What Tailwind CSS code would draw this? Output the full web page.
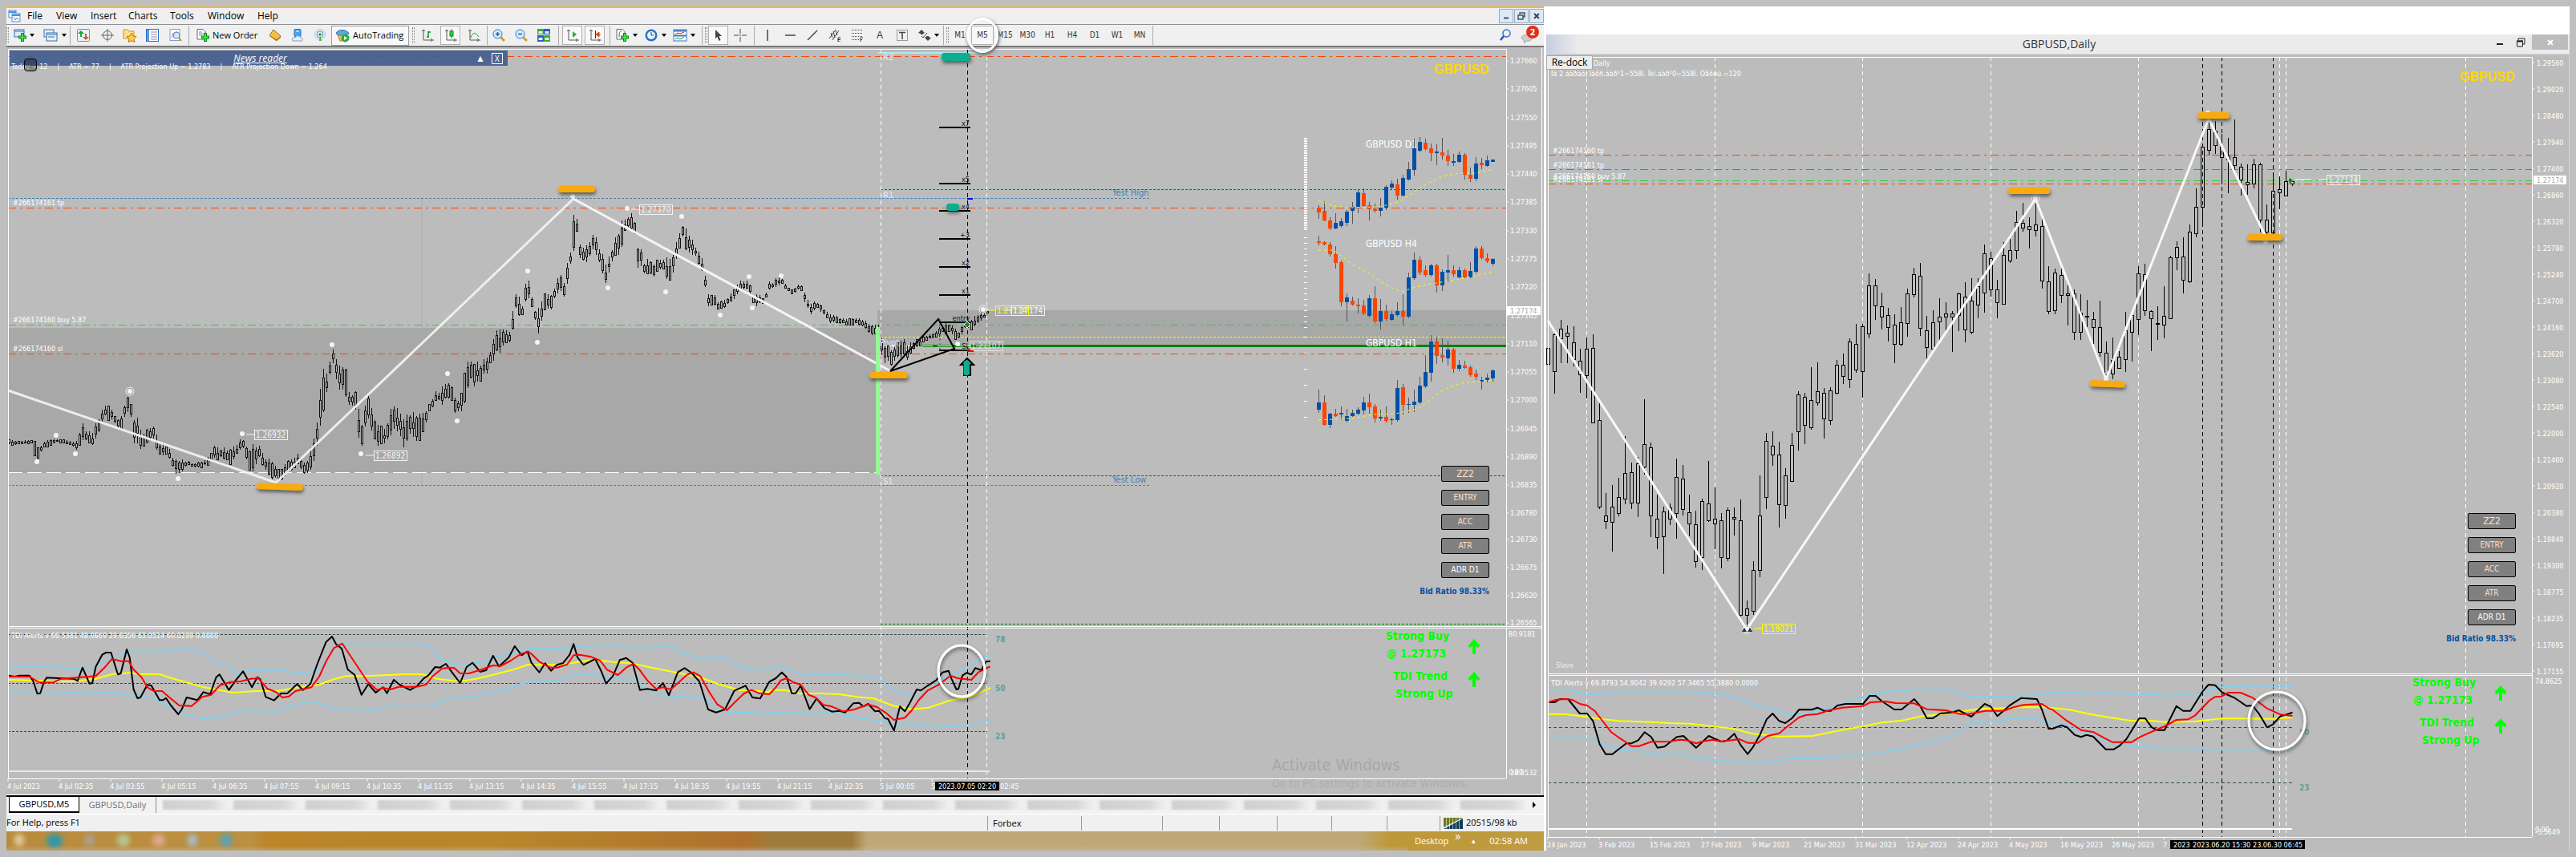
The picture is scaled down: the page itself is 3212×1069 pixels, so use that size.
<!DOCTYPE html>
<html lang="en">
<head>
  <meta charset="UTF-8"/>
  <meta name="viewport" content="width=device-width, initial-scale=1.0"/>
  <title>GBPUSD,M5</title>
  <script src="https://cdn.jsdelivr.net/npm/@tailwindcss/browser@4"></script>
</head>
<body class="bg-[#bfbfbf] p-2 font-['Open_Sans','Liberation_Sans',sans-serif] text-xs text-black">

<main class="flex gap-[3px] bg-white">

  <!-- Terminal window -->
  <section class="relative flex min-w-0 flex-[1917] flex-col border-t-2 border-[#f0b848] bg-[#f0f0f0]">

    <!-- Menu -->
    <nav class="flex h-[21px] items-center border-b border-[#8e8e96] pl-0.5 leading-5">
      <svg class="mr-2 h-4 w-4" viewBox="0 0 16 16" fill="#fff" stroke="#4a8fd8"><rect x="1" y="1" width="9" height="9"/><path d="M1 3h9" stroke-width="2"/><rect x="5" y="5" width="10" height="10"/><path d="M5 7h10" stroke-width="2"/><path d="M7 9l2 4 2-3 2 3" fill="none"/></svg>
      <a href="#" class="w-9 pl-0">File</a>
      <a href="#" class="w-[43px]">View</a>
      <a href="#" class="w-[47px]">Insert</a>
      <a href="#" class="w-[52px]">Charts</a>
      <a href="#" class="w-[47px]">Tools</a>
      <a href="#" class="w-[62px]">Window</a>
      <a href="#">Help</a>
      <div class="ml-auto flex gap-px">
        <button aria-label="Minimize" class="grid h-[18px] w-[18px] place-items-center border border-[#9ab] bg-[#dceaf8]"><svg class="h-3 w-3" viewBox="0 0 12 12"><path d="M3 8.500h6" stroke="#456" stroke-width="2"/></svg></button>
        <button aria-label="Restore" class="grid h-[18px] w-[18px] place-items-center border border-[#9ab] bg-[#dceaf8]"><svg class="h-3 w-3" viewBox="0 0 12 12" fill="none" stroke="#456"><path d="M4 4V2h6v5H8M2 5h6v5H2z" stroke-width="1.500"/></svg></button>
        <button aria-label="Close" class="grid h-[18px] w-[18px] place-items-center border border-[#9ab] bg-[#dceaf8]"><svg class="h-3 w-3" viewBox="0 0 12 12"><path d="M3 3l6 6M9 3l-6 6" stroke="#345" stroke-width="2"/></svg></button>
      </div>
    </nav>

    <!-- Toolbar -->
    <div class="flex h-7 items-center border-b-2 border-[#777] text-[11px]">
      <span class="h-5 w-[3px] border-x border-dotted border-[#888]"></span>
      <button aria-label="New chart" class="flex w-[38px] items-center gap-1 pl-1.5"><svg class="h-4 w-4" viewBox="0 0 16 16"><rect x="1" y="1" width="12" height="9" fill="#dcebfa" stroke="#3a6ea8"/><path d="M1 3h12" stroke="#3a6ea8"/><path d="M11 5v11M6 10.500h10" stroke="#0a8a1a" stroke-width="4"/><path d="M11 6v9M7 10.500h8" stroke="#3ce04a" stroke-width="2"/></svg><svg class="h-1 w-1.5" viewBox="0 0 6 4"><path d="M0 0h6L3 4z"/></svg></button>
      <button aria-label="Profiles" class="flex w-[38px] items-center gap-1 pl-1"><svg class="h-4 w-5" viewBox="0 0 20 16" fill="#e4effa" stroke="#3a6ea8"><rect x="2" y="1" width="12" height="9"/><rect x="5" y="5" width="13" height="10"/><path d="M5 7h13M7 10h8"/></svg><svg class="h-1 w-1.5" viewBox="0 0 6 4"><path d="M0 0h6L3 4z"/></svg></button>
      <span class="h-6 w-px bg-[#aaa]"></span>
      <button aria-label="Market watch" class="grid h-6 w-8 place-items-center"><svg class="h-4 w-4" viewBox="0 0 16 16"><rect x=".5" y=".5" width="15" height="15" rx="1" fill="#e4f0fc" stroke="#5b94cf"/><path d="M5 2l4 4H6v4H4V6H1z" fill="#18a830"/><path d="M11 14l4-4h-3V6h-2v4H7z" fill="#e0541c"/></svg></button>
      <button aria-label="Data window" class="grid h-6 w-7 place-items-center"><svg class="h-4 w-4" viewBox="0 0 16 16" fill="none" stroke="#666"><circle cx="8" cy="8" r="5.500"/><path d="M8 0v16M0 8h16"/></svg></button>
      <button aria-label="Navigator" class="grid h-6 w-7 place-items-center"><svg class="h-[18px] w-[18px]" viewBox="0 0 18 18"><path d="M1 2h5l2 2h6v9H1z" fill="#ffe08a" stroke="#c8962c"/><path d="M11 6l2 4 4 .5-3 3 .8 4.200-3.800-2-3.700 2 .7-4.200-3-3 4-.5z" fill="#ffcf3a" stroke="#b5761a"/></svg></button>
      <button aria-label="Terminal" class="grid h-6 w-7 place-items-center"><svg class="h-4 w-4" viewBox="0 0 16 16"><rect x=".5" y=".5" width="15" height="15" fill="#fff" stroke="#2d6fc0"/><path d="M1 1h3v14H1z" fill="#5b9be0"/><path d="M6 4h8M6 7h8M6 10h8M6 13h8" stroke="#88a"/></svg></button>
      <button aria-label="Strategy tester" class="grid h-6 w-[30px] place-items-center"><svg class="h-4 w-4" viewBox="0 0 16 16"><rect x="1" y=".5" width="12" height="14" fill="#fff" stroke="#7ba4cf"/><path d="M3 11l2-6 2 4 2-6" fill="none" stroke="#a86"/><circle cx="9" cy="8" r="4" fill="#cfe6fa" fill-opacity=".8" stroke="#4b87c4"/><path d="M12 11l3 4" stroke="#c90" stroke-width="2"/></svg></button>
      <span class="mx-px h-6 w-px bg-[#aaa]"></span>
      <button class="flex w-[92px] items-center gap-1 pl-2 whitespace-nowrap"><svg class="h-4 w-4 shrink-0" viewBox="0 0 16 16"><path d="M1 .5h7l3 3V13H1z" fill="#fff" stroke="#667"/><path d="M3 4h4M3 6h6M3 8h4" stroke="#888"/><path d="M11 5v11M6 10.500h10" stroke="#0a8a1a" stroke-width="4"/><path d="M11 6v9M7 10.500h8" stroke="#3ce04a" stroke-width="2"/></svg>New Order</button>
      <button aria-label="MetaEditor" class="grid h-6 w-7 place-items-center"><svg class="h-4 w-4" viewBox="0 0 16 16"><path d="M6 1l9 8-5 6-9-7z" fill="#f3c14a" stroke="#a86c12"/><path d="M1 8l9 5 5-4v2l-5 4-9-6z" fill="#b07818"/></svg></button>
      <button aria-label="VPS" class="grid h-6 w-7 place-items-center"><svg class="h-4 w-4" viewBox="0 0 16 16"><rect x="4" y=".5" width="8" height="9" rx="1" fill="#4ba3ee" stroke="#1d6fc4"/><path d="M6 3h4" stroke="#fff"/><path d="M2 15c-2-3 1-5 3-4 1-3 6-3 7 0 3 0 3 4 1 4z" fill="#e4eefa" stroke="#7d9cc4"/></svg></button>
      <button aria-label="Signals" class="grid h-6 w-7 place-items-center"><svg class="h-4 w-4" viewBox="0 0 16 16" fill="none"><circle cx="8" cy="7" r="6.500" stroke="#9cc4e0"/><circle cx="8" cy="7" r="4" stroke="#4a94d0"/><circle cx="8" cy="7" r="1.800" fill="#2a9a3a"/><path d="M8 8l2 7H7z" fill="#48b050"/></svg></button>
      <button class="flex h-[25px] w-[97px] items-center gap-1 border border-[#a0a0a0] bg-[#f8f8f8] pl-1 whitespace-nowrap"><svg class="h-[18px] w-[18px] shrink-0" viewBox="0 0 18 18"><path d="M1 7c1-6 14-6 16 0-4 3-12 3-16 0z" fill="#5aa7e4" stroke="#2d74b4"/><path d="M3 9h11l-3 7H6z" fill="#f0c050" stroke="#b08020"/><circle cx="12.500" cy="12.500" r="5" fill="#28b03c"/><path d="M11 10v5l4-2.500z" fill="#fff"/></svg>AutoTrading</button>
      <span class="mx-1 h-5 w-[3px] border-x border-dotted border-[#888]"></span>
      <button aria-label="Bar chart" class="grid h-6 w-6 place-items-center"><svg class="h-4 w-4" viewBox="0 0 16 16" fill="none" stroke="#555"><path d="M3 1v13h13M1 3l2-2 2 2M12 12l2 2-2 2"/><path d="M9 3v8M9 4h3M7 10h2" stroke="#0a8a1a" stroke-width="1.500"/></svg></button>
      <button aria-label="Candlesticks" class="ml-1 grid h-6 w-[25px] place-items-center border border-[#b0b0b0] bg-[#f8f8f8]"><svg class="h-4 w-4" viewBox="0 0 16 16" fill="none" stroke="#555"><path d="M3 1v13h13M1 3l2-2 2 2M12 12l2 2-2 2"/><path d="M9 0v12" stroke="#0a8a1a"/><rect x="7" y="3" width="4" height="6" fill="#2cd040" stroke="#0a8a1a"/></svg></button>
      <button aria-label="Line chart" class="grid h-6 w-[33px] place-items-center"><svg class="h-4 w-4" viewBox="0 0 16 16" fill="none" stroke="#555"><path d="M3 1v13h13M1 3l2-2 2 2M12 12l2 2-2 2"/><path d="M4 11c2-6 5-8 10-1" stroke="#2a9a3a"/></svg></button>
      <span class="h-6 w-px bg-[#aaa]"></span>
      <button aria-label="Zoom in" class="grid h-6 w-7 place-items-center"><svg class="h-4 w-4" viewBox="0 0 16 16"><path d="M10 10l5 5" stroke="#d8a020" stroke-width="3"/><circle cx="6.500" cy="6.500" r="5.500" fill="#d4eafc" stroke="#2d74c0"/><path d="M6.500 4v5M4 6.500h5" stroke="#1d5fb0" stroke-width="1.500"/></svg></button>
      <button aria-label="Zoom out" class="grid h-6 w-7 place-items-center"><svg class="h-4 w-4" viewBox="0 0 16 16"><path d="M10 10l5 5" stroke="#d8a020" stroke-width="3"/><circle cx="6.500" cy="6.500" r="5.500" fill="#d4eafc" stroke="#2d74c0"/><path d="M4 6.500h5" stroke="#1d5fb0" stroke-width="1.500"/></svg></button>
      <button aria-label="Tile windows" class="grid h-6 w-7 place-items-center"><svg class="h-4 w-4" viewBox="0 0 16 16"><path d="M0 0h8v7H0zM8 8h8v8H8z" fill="#3fa83c"/><path d="M8 0h8v7H8zM0 8h8v8H0z" fill="#2c5fc4"/><path d="M1.500 3h5v3h-5zM9.500 3h5v3h-5zM1.500 11h5v3h-5zM9.500 11h5v3h-5z" fill="#dcecff"/></svg></button>
      <span class="mx-1 h-6 w-px bg-[#aaa]"></span>
      <button aria-label="Auto scroll" class="grid h-6 w-[25px] place-items-center border border-[#b0b0b0] bg-[#f8f8f8]"><svg class="h-4 w-4" viewBox="0 0 16 16" fill="none" stroke="#555"><path d="M3 1v13h13M1 3l2-2 2 2M12 12l2 2-2 2"/><path d="M8 3l5 4-5 4z" fill="#22b038" stroke="none"/></svg></button>
      <button aria-label="Chart shift" class="ml-[3px] grid h-6 w-[25px] place-items-center border border-[#b0b0b0] bg-[#f8f8f8]"><svg class="h-4 w-4" viewBox="0 0 16 16" fill="none" stroke="#555"><path d="M3 1v13h13M1 3l2-2 2 2M12 12l2 2-2 2"/><path d="M8.500 2v10" stroke="#333"/><path d="M15 7h-4M13 4l-4 3 4 3z" fill="#d84818" stroke="#d84818"/></svg></button>
      <span class="mx-1.5 h-6 w-px bg-[#aaa]"></span>
      <button aria-label="Indicators" class="flex w-9 items-center gap-1"><svg class="h-4 w-[18px]" viewBox="0 0 18 16"><path d="M2 .5h7l3 3V13H2z" fill="#fff" stroke="#667"/><path d="M5 10c0-6 1-7 3-7" fill="none" stroke="#555"/><path d="M12 5v11M7 10.500h10" stroke="#0a8a1a" stroke-width="4"/><path d="M12 6v9M8 10.500h8" stroke="#3ce04a" stroke-width="2"/></svg><svg class="h-1 w-1.5" viewBox="0 0 6 4"><path d="M0 0h6L3 4z"/></svg></button>
      <button aria-label="Periods" class="flex w-9 items-center gap-1"><svg class="h-4 w-[18px]" viewBox="0 0 18 16"><circle cx="9" cy="8" r="7.500" fill="#2870c8"/><circle cx="9" cy="8" r="5" fill="#eaf4ff"/><path d="M9 4v4h3" fill="none" stroke="#245"/></svg><svg class="h-1 w-1.5" viewBox="0 0 6 4"><path d="M0 0h6L3 4z"/></svg></button>
      <button aria-label="Templates" class="flex w-9 items-center gap-1"><svg class="h-4 w-[18px]" viewBox="0 0 18 16"><rect x="1" y="1" width="16" height="14" fill="#fff" stroke="#3a7ac0"/><path d="M1 2.500h16M1 8.500h16" stroke="#3a7ac0" stroke-width="2"/><path d="M3 7l3-2 3 1 5-2" fill="none" stroke="#c02810"/><path d="M3 13l3-2 3 2 5-3" fill="none" stroke="#189030"/></svg><svg class="h-1 w-1.5" viewBox="0 0 6 4"><path d="M0 0h6L3 4z"/></svg></button>
      <span class="mr-[3px] h-6 w-px bg-[#aaa]"></span>
      <span class="mr-px h-5 w-[3px] border-x border-dotted border-[#888]"></span>
      <button aria-label="Cursor" class="grid h-6 w-[25px] place-items-center border border-[#b0b0b0] bg-[#f8f8f8]"><svg class="h-4 w-4" viewBox="0 0 16 16"><path d="M4 1l8 8H8.500l2 5-2 1-2-5L4 12z" fill="#444"/></svg></button>
      <button aria-label="Crosshair" class="grid h-6 w-[30px] place-items-center"><svg class="h-4 w-4" viewBox="0 0 16 16"><path d="M8 0v6M8 10v6M0 8h6M10 8h6M7 8h2" stroke="#444"/></svg></button>
      <span class="mx-0.5 h-6 w-px bg-[#aaa]"></span>
      <button aria-label="Vertical line" class="grid h-6 w-7 place-items-center"><svg class="h-4 w-4" viewBox="0 0 16 16"><path d="M8 1v14" stroke="#444" stroke-width="1.500"/></svg></button>
      <button aria-label="Horizontal line" class="grid h-6 w-7 place-items-center"><svg class="h-4 w-4" viewBox="0 0 16 16"><path d="M2 8h13" stroke="#444" stroke-width="1.500"/></svg></button>
      <button aria-label="Trendline" class="grid h-6 w-7 place-items-center"><svg class="h-4 w-4" viewBox="0 0 16 16"><path d="M2 14L14 2" stroke="#444" stroke-width="1.500"/></svg></button>
      <button aria-label="Channel" class="grid h-6 w-7 place-items-center"><svg class="h-4 w-4" viewBox="0 0 16 16"><path d="M1 12L9 1M5 14l8-12M3 5l2 6M6 3l2 8M9 2l2 6" stroke="#444" fill="none"/><path d="M15 11h-3v5h3M12 13.500h3" stroke="#222" fill="none"/></svg></button>
      <button aria-label="Fibonacci" class="grid h-6 w-7 place-items-center"><svg class="h-4 w-4" viewBox="0 0 16 16" stroke="#444" fill="none"><path d="M1 1.500h13M1 5.500h13M1 9.500h13M1 13.500h9" stroke-dasharray="1 1"/><path d="M12 16v-5h3M12 13.500h2"/></svg></button>
      <button class="grid h-6 w-7 place-items-center font-['Liberation_Sans'] text-xs text-[#333]">A</button>
      <button aria-label="Text label" class="grid h-6 w-7 place-items-center"><svg class="h-4 w-4" viewBox="0 0 16 16" fill="none" stroke="#444"><rect x="1.500" y="1.500" width="13" height="13" stroke-dasharray="1 1"/><path d="M4 4.500h8M8 4v9" stroke-width="1.500"/></svg></button>
      <button aria-label="Arrows" class="flex w-[34px] items-center gap-1 pl-1.5"><svg class="h-4 w-4" viewBox="0 0 16 16" fill="#444"><path d="M4 1l4 4-2 1v1H3V6L0 5zM12 15l-4-4 2-1V9h3v1l3 1z"/><path d="M4 9l2 2 5-6" stroke="#444" fill="none"/></svg><svg class="h-1 w-1.5" viewBox="0 0 6 4"><path d="M0 0h6L3 4z"/></svg></button>
      <span class="mx-[3px] h-6 w-px bg-[#aaa]"></span>
      <span class="h-5 w-[3px] border-x border-dotted border-[#888]"></span>
      <div class="flex font-['DejaVu_Sans_Condensed','Liberation_Sans',sans-serif] text-[10px] text-[#333]">
        <button class="h-6 w-7">M1</button>
        <button class="relative h-6 w-7 border border-[#b0b0b0] bg-[#f8f8f8]">M5<span class="absolute -top-[11px] -left-[7px] z-10 h-[44px] w-10 rounded-[50%] border-[3px] border-white shadow-[1px_2px_4px_#555]"></span></button>
        <button class="h-6 w-7">M15</button>
        <button class="h-6 w-7">M30</button>
        <button class="h-6 w-7">H1</button>
        <button class="h-6 w-7">H4</button>
        <button class="h-6 w-7">D1</button>
        <button class="h-6 w-7">W1</button>
        <button class="h-6 w-7">MN</button>
      </div>
      <span class="ml-0.5 h-6 w-px bg-[#aaa]"></span>
      <button aria-label="Search" class="ml-auto"><svg class="h-4 w-4" viewBox="0 0 16 16" fill="none"><circle cx="9.500" cy="5.500" r="4.500" stroke="#3a6fd8" stroke-width="1.500"/><path d="M6 9l-4 5" stroke="#2850b8" stroke-width="2.500"/></svg></button>
      <button class="relative mr-1.5 ml-2.5 h-6 w-6"><svg class="h-6 w-6" viewBox="0 0 24 24"><path d="M2 15c2-5 12-5 14 0-1 4-6 5-8 4l-2 3-1-4c-2-1-3-2-3-3z" fill="#ccc" stroke="#aaa"/></svg><span class="absolute top-0 right-0 h-4 w-4 rounded-full bg-[#e0301c] text-center text-[11px] leading-4 font-bold text-white">2</span></button>
    </div>

    <!-- M5 chart -->
    <div class="relative">
      <svg id="m5" class="block h-auto w-full bg-[#bcbcbc] font-['DejaVu_Sans_Condensed','Liberation_Sans',sans-serif] text-[9px]" viewBox="8 59 1917 933"></svg>
      <div class="absolute top-1 left-1 flex h-[19px] w-[621px] items-center bg-[#46608f]/95 text-white">
        <span class="flex-1 pl-11 text-center text-xs italic underline">News reader</span>
        <button aria-label="Collapse" class="mr-2 text-xs leading-none">▲</button>
        <button aria-label="Close news" class="mr-1.5 grid h-3.5 w-3.5 place-items-center border border-white text-[10px] leading-none">X</button>
      </div>
      <div class="absolute top-[18px] left-1.5 flex gap-3 font-['DejaVu_Sans_Condensed','Liberation_Sans',sans-serif] text-[9px] leading-3 whitespace-pre text-white">
        <span>Today = 12</span><span>|</span><span>ATR = 77</span><span>|</span><span>ATR Projection Up = 1.2783</span><span>|</span><span>ATR Projection Down = 1.264</span>
      </div>
      <div class="absolute top-3.5 left-[22px] h-4 w-4 rounded-sm border border-black bg-black/30"></div>
      <div class="absolute top-[522px] right-[68px] flex w-[60px] flex-col gap-2.5 font-['DejaVu_Sans_Condensed','Liberation_Sans',sans-serif] text-[10px] text-[#ffdfc0]">
        <button class="h-5 rounded-[2px] border border-black bg-[#808080] text-xs">ZZ2</button>
        <button class="h-5 rounded-[2px] border border-black bg-[#808080]">ENTRY</button>
        <button class="h-5 rounded-[2px] border border-black bg-[#808080]">ACC</button>
        <button class="h-5 rounded-[2px] border border-black bg-[#808080]">ATR</button>
        <button class="h-5 rounded-[2px] border border-black bg-[#808080] text-white">ADR D1</button>
      </div>
    </div>

    <!-- Chart tabs -->
    <div class="flex h-[23px] items-start border-t-2 border-black bg-[#f2f2f2] pl-[3px] text-[11px] leading-[18px]">
      <button class="h-5 w-[88px] border-x border-b-2 border-black bg-white">GBPUSD,M5</button>
      <button class="h-5 w-24 border-r border-[#888] text-[#707070]">GBPUSD,Daily</button>
      <div class="mt-1 ml-2 h-3 flex-1 bg-[repeating-linear-gradient(90deg,#d0d0d0_0px,#d8d8d8_60px,#efefef_80px,#efefef_86px,#d0d0d0_90px)] blur-[1px]"></div>
      <button aria-label="Scroll tabs" class="mx-2 mt-1"><svg class="h-3 w-2" viewBox="0 0 8 12"><path d="M2 2l4 4-4 4z"/></svg></button>
    </div>

    <!-- Status bar -->
    <div class="flex h-[22px] items-center border-t border-white bg-[#f0f0f0] text-[11px]">
      <span class="flex-1">For Help, press F1</span>
      <span class="h-[18px] w-[117px] border-l border-[#999] pl-1.5 leading-[18px]">Forbex</span>
      <span class="h-[18px] w-[101px] border-l border-[#999]"></span>
      <span class="h-[18px] w-[71px] border-l border-[#999]"></span>
      <span class="h-[18px] w-[72px] border-l border-[#999]"></span>
      <span class="h-[18px] w-[68px] border-l border-[#999]"></span>
      <span class="h-[18px] w-[69px] border-l border-[#999]"></span>
      <span class="h-[18px] w-[66px] border-l border-[#999]"></span>
      <span class="flex h-[18px] w-[130px] items-center gap-1 border-l border-[#999] pl-1"><svg class="h-3.5 w-6" viewBox="0 0 24 14"><path d="M0 0h24L0 12z" fill="#6b7a1c"/><path d="M24 1v13H0z" fill="#123f5c"/><path d="M3.500 0v14M7.500 0v14M11.500 0v14M15.500 0v14M19.500 0v14" stroke="#f0f0f0" stroke-opacity=".6"/></svg>20515/98 kb</span>
    </div>

    <!-- Taskbar -->
    <div class="flex h-6 items-center bg-[linear-gradient(90deg,#b98c3c_0%,#bb9040_16%,#bb8528_17%,#ba862a_32%,#b0762c_45%,#b0702c_48%,#9f7c3c_50%,#9f7c3c_55%,#bfa878_56%,#bfa878_88%,#be9838_90%,#c09c40_100%)] text-[11px] text-white">
      <div class="flex gap-7 pl-2.5 blur-[3px]">
        <span class="h-4 w-3 rounded-full bg-[#e0c898]"></span>
        <span class="h-[18px] w-5 rounded-full bg-[#3098a8]"></span>
        <span class="h-4 w-3 rounded-full bg-[#a8a090]"></span>
        <span class="h-4 w-4 rounded-full bg-[#b8c498]"></span>
        <span class="h-4 w-4 rounded-full bg-[#e0a888]"></span>
        <span class="h-4 w-3 rounded-full bg-[#a8bcc8]"></span>
        <span class="h-4 w-4 rounded-full bg-[#58a4b4]"></span>
      </div>
      <span class="ml-auto">Desktop</span>
      <span class="ml-2 -mt-3 text-sm">»</span>
      <span class="ml-3 text-[8px]">▲</span>
      <span class="mr-5 ml-4">02:58 AM</span>
    </div>
    <div class="absolute right-[170px] -bottom-2 left-0 h-[14px] bg-gradient-to-b from-transparent to-[#bfbfbf]"></div>
  </section>

  <!-- Undocked daily chart -->
  <section class="flex min-w-0 flex-[1276] flex-col bg-[#bcbcbc]">
    <div class="h-[35px] bg-white"></div>
    <header class="relative flex h-[25px] items-start border-b border-[#d6d6d6] bg-[linear-gradient(90deg,#c4cee0_0px,#ebebeb_40px)]">
      <h1 class="flex-1 pl-[102px] text-center text-sm leading-6 text-[#333]">GBPUSD,Daily</h1>
      <button aria-label="Minimize" class="grid h-5 w-6 place-items-center"><svg class="h-3 w-3" viewBox="0 0 12 12"><path d="M2 8h8" stroke="#222" stroke-width="2"/></svg></button>
      <button aria-label="Restore" class="grid h-5 w-7 place-items-center"><svg class="h-3 w-3" viewBox="0 0 12 12" fill="none" stroke="#222"><path d="M3 3V1h8v7H9M1.500 4h7v7h-7z"/><path d="M1 4.500h8" stroke-width="2"/></svg></button>
      <button aria-label="Close" class="mr-0.5 grid h-[19px] w-[45px] place-items-center bg-[#bcbcbc]"><svg class="h-2 w-2" viewBox="0 0 8 8"><path d="M1 1l6 6M7 1L1 7" stroke="#fff" stroke-width="2"/></svg></button>
    </header>
    <div class="relative">
      <svg id="d1" class="block h-auto w-full font-['DejaVu_Sans_Condensed','Liberation_Sans',sans-serif] text-[9px]" viewBox="1928 68 1276 993"></svg>
      <button class="absolute top-px left-0 h-[18px] w-[58px] border border-[#aaa] bg-[#ececec] leading-4">Re-dock</button>
      <div class="absolute top-[572px] right-[67px] flex w-[60px] flex-col gap-2.5 font-['DejaVu_Sans_Condensed','Liberation_Sans',sans-serif] text-[10px] text-[#ffdfc0]">
        <button class="h-5 rounded-[2px] border border-black bg-[#808080] text-xs">ZZ2</button>
        <button class="h-5 rounded-[2px] border border-black bg-[#808080]">ENTRY</button>
        <button class="h-5 rounded-[2px] border border-black bg-[#808080]">ACC</button>
        <button class="h-5 rounded-[2px] border border-black bg-[#808080]">ATR</button>
        <button class="h-5 rounded-[2px] border border-black bg-[#808080] text-white">ADR D1</button>
      </div>
    </div>
  </section>
</main>

<script>
  const DASHDOT = '10 5 3 5', DOT = '3 2', DASH = '5 4';

  // small svg string helpers
  const ln = (x1, y1, x2, y2, c, w = 1, dash = '') =>
    `<path d="M${x1} ${y1}L${x2} ${y2}" stroke="${c}" stroke-width="${w}" stroke-dasharray="${dash}" fill="none"/>`;
  const tx = (x, y, s, c = '#fff', extra = '') => `<text x="${x}" y="${y}" fill="${c}" ${extra}>${s}</text>`;
  const poly = (pts, c, w, extra = '') => `<polyline points="${pts}" stroke="${c}" stroke-width="${w}" fill="none" ${extra}/>`;
  const dot = (x, y) => `<ellipse cx="${x}" cy="${y}" rx="3" ry="3" fill="#f4f4f4"/>`;
  const ring = (x, y) => `<circle cx="${x}" cy="${y}" r="5" fill="none" stroke="#f4f4f4" stroke-width="1"/><circle cx="${x}" cy="${y}" r="3" fill="#f4f4f4"/>`;
  const tag = (x, y, s, c = '#f4f4f4') =>
    ln(x - 10, y + 6, x, y + 6, c) + `<rect x="${x}.5" y="${y}.500" width="41" height="12" fill="none" stroke="${c}"/>` + tx(x + 2, y + 10, s, c, 'class="text-[10px]"');
  const mark = (x, y, w, r = 0) => `<rect x="${x}" y="${y}" width="${w}" height="8" rx="4" fill="#f9ab0c" filter="url(#sh)" transform="rotate(${r} ${x} ${y})"/>`;
  const defs = '<defs><filter id="sh" x="-30%" y="-60%" width="160%" height="260%"><feDropShadow dx="1" dy="3" stdDeviation="2" flood-color="#333" flood-opacity=".7"/></filter></defs>';
  // one trace = sections of sampled points, each section has its own origin and step
  const trace = (parts, c, w) => poly(parts.map(([ox, sx, oy, s]) =>
    s.split(' ').map(p => { const [x, y] = p.split(','); return (ox + x / sx).toFixed(1) + ',' + (oy + y / 3).toFixed(1); }).join(' ')).join(' '), c, w, 'stroke-linejoin="round"');
  const signals = (x, y) => {
    const b = 'class="font-[\'DejaVu_Sans_Condensed\'] text-sm font-bold"';
    const up = (ax, ay) => `<path d="M${ax} ${ay + 18}V${ay + 3}M${ax - 6} ${ay + 9}L${ax} ${ay + 2}L${ax + 6} ${ay + 9}" stroke="#0f0" stroke-width="4" fill="none"/>`;
    return tx(x, y + 4, 'Strong Buy', '#0f0', b) + tx(x + 1, y + 26, '@ 1.27173', '#0f0', b) + tx(x + 9, y + 54, 'TDI Trend', '#0f0', b) +
      tx(x + 12, y + 76, 'Strong Up', '#0f0', b) + up(x + 110, y + 4) + up(x + 110, y + 45);
  };

  // ---------- M5 chart ----------
  let s = defs;
  s += '<rect x="10" y="409" width="1084" height="181" fill="#a8a8a8"/><rect x="1094" y="387" width="784" height="44" fill="#a8a8a8"/>';
  s += ln(526, 247, 526, 409, '#acacac') + ln(526, 590, 526, 605, '#acacac');
  s += '<g shape-rendering="crispEdges">';
  s += ln(10, 70, 1878, 70, '#ff4500', 1, DASHDOT) + ln(1098, 236, 1878, 236, '#f00', 1, DOT) + ln(10, 247, 1434, 247, '#4682b4', 1, DOT);
  s += ln(10, 259, 1878, 259, '#ff4500', 1, DASHDOT) + ln(10, 405, 1878, 405, '#32cd32', 1, DASHDOT) + ln(10, 441, 1878, 441, '#ff4500', 1, DASHDOT);
  s += ln(1098, 420, 1878, 420, '#ff0', 1, DOT) + ln(10, 589, 1094, 589, '#fff', 1, '18 6') + ln(1098, 593, 1878, 593, '#008000', 1, DOT);
  s += ln(10, 605, 1434, 605, '#4682b4', 1, DOT) + ln(1098, 778, 1878, 778, '#008000', 1, DOT);
  s += ln(1094, 66, 1231, 66, '#b0e8ec', 2);
  s += ln(1098, 61, 1098, 971, '#fff', 1, DASH) + ln(1230, 61, 1230, 971, '#fff', 1, DASH) + ln(1206, 61, 1206, 971, '#000', 1, DASH);
  s += ln(1150, 431, 1878, 431, '#008000', 3) + ln(1097, 431, 1234, 431, '#fff', 1, '18 6');

  // x, high, low
  const swing = [[11,548,555],[40,548,555],[43,548,574],[46,558,574],[53,548,563],[70,546,552],[90,548,556],[95,548,563],[103,528,550],[114,537,558],[123,520,542],[130,497,523],[142,513,530],[150,525,543],[154,497,527],[162,493,513],[166,513,555],[179,533,563],[190,527,547],[199,547,573],[208,553,568],[215,567,587],[223,573,597],[232,573,580],[243,577,583],[257,570,583],[270,550,573],[286,560,582],[302,545,557],[311,550,597],[322,549,573],[330,563,590],[342,577,602],[353,577,600],[362,573,592],[371,563,583],[379,575,598],[389,553,593],[395,523,560],[402,453,537],[407,458,490],[414,433,457],[422,448,485],[430,445,493],[435,487,507],[443,483,517],[448,503,557],[451,520,563],[459,487,523],[469,523,563],[480,530,553],[490,500,540],[502,517,560],[512,510,550],[522,513,560],[533,507,520],[542,487,503],[550,478,508],[558,468,497],[570,500,522],[577,465,515],[587,438,482],[598,450,485],[609,433,463],[618,410,450],[627,408,440],[636,410,427],[639,387,420],[643,367,390],[651,372,400],[658,340,370],[665,378,393],[670,385,423],[679,360,392],[689,358,387],[695,338,367],[703,345,378],[711,308,337],[715,250,327],[719,267,298],[723,298,323],[730,308,330],[738,287,317],[747,298,335],[755,323,357],[762,308,333],[770,280,323],[782,263,287],[791,267,297],[795,295,340],[803,322,342],[814,322,347],[826,318,337],[830,320,362],[838,317,348],[843,295,327],[850,273,302],[859,288,320],[870,307,327],[877,323,353],[883,360,383],[898,375,388],[912,365,377],[919,350,367],[934,348,363],[938,363,382],[953,368,382],[958,350,363],[974,345,355],[986,360,368],[998,353,360],[1004,367,380],[1011,377,395],[1017,372,385],[1035,390,403],[1055,395,407],[1069,395,405],[1087,402,420],[1096,405,420],[1100,420,453],[1111,427,460],[1120,420,447],[1131,423,450],[1142,420,437],[1154,417,427],[1165,412,423],[1176,402,417],[1186,403,417],[1194,413,427],[1203,402,412],[1216,393,410],[1225,388,402],[1232,386,391]];
  const rnd = n => { const v = Math.sin(n * 127.1) * 43758.5; return v - Math.floor(v); };
  let k = 0;
  for (let x = 11, i = 0; x < 1234; x += 4, i++) {
    while (k < swing.length - 2 && swing[k + 1][0] < x) k++;
    const a = swing[k], b = swing[k + 1], t = (x - a[0]) / (b[0] - a[0]);
    let hi = a[1] + (b[1] - a[1]) * t, lo = a[2] + (b[2] - a[2]) * t;
    const span = lo - hi;
    hi += span * .35 * rnd(i);
    lo -= span * .3 * rnd(i + 500);
    const h = lo - hi, top = Math.round(hi + h * .45 * rnd(i + 900)), bot = Math.round(lo - h * .4 * rnd(i + 1300));
    s += ln(x + .5, Math.round(hi), x + .5, Math.round(lo), '#111') +
      `<rect x="${x - 1}.5" y="${top}.5" width="2" height="${Math.max(1, bot - top)}" fill="#b8b8b8" stroke="#111"/>`;
  }
  s += '</g>';

  s += poly('10,487 344,602 715,248', '#f4f4f4', 3, 'stroke-opacity=".9"') + poly('715,248 1109,462', '#f4f4f4', 3);
  s += '<rect x="1092" y="408" width="5" height="184" fill="#90ff90" fill-opacity=".95"/>';
  [[70,543],[46,576],[94,566],[222,597],[302,541],[414,430],[450,566],[558,466],[570,525],[658,338],[670,427],[714,245],[758,359],[782,260],[850,270],[830,364],[898,393],[934,345],[938,384],[974,344],[1194,429]].forEach(p => s += dot(...p));
  s += ring(162, 488) + ring(1226, 386);
  s += tag(317, 536, '1.26932') + tag(466, 562, '1.26892') + tag(797, 255, '1.27370') + tag(1209, 425, '1.27107', '#e0e0e0') + tag(1241, 381, '1.27174', '#ff0') + tag(1261, 381, '1.27174');
  s += mark(696, 232, 46) + mark(320, 602, 58, 2) + mark(1084, 464, 48);
  s += poly('1110,463 1170,398 1190,435 1110,463', '#000', 2) + ln(1172, 398, 1172, 440, '#456', 1, '3 3');

  // target ladder
  [[159,'x7'],[229,'x5'],[263,'x4'],[298,'+3'],[333,'x2'],[368,'x1'],[402,'entry'],[437,'SL']].forEach(([y, t]) =>
    s += ln(1171, y, 1210, y, '#000', 2) + tx(1209, y - 2, t, '#111', 'text-anchor="end" class="text-[9px]"'));
  s += ln(1206, 248, 1213, 248, '#00f', 2) + ln(1206, 438, 1214, 438, '#f00', 2);
  s += '<rect x="1174" y="66" width="36" height="10" rx="4" fill="#0aad8f" filter="url(#sh)"/><rect x="1180" y="254" width="16" height="9" rx="4" fill="#0aad8f" filter="url(#sh)"/>';
  s += '<path d="M1206 401l4 4-4 4-4-4z" fill="#0a8a1a" stroke="#fff"/>';
  s += '<path d="M1206 447l8 8h-4v13h-8v-13h-4z" fill="#0aad8f" stroke="#000" stroke-width="2"/><path d="M1205 453v12" stroke="#0aad8f" stroke-width="7" stroke-linecap="round"/>';
  s += '<path d="M12 68h8l-4 5z" fill="#fff"/>';

  const big = 'class="text-[11px]"';
  s += tx(1101, 75, 'R2', '#e6e6fa', big) + tx(1101, 247, 'R1', '#e6e6fa', big) + tx(1097, 431, 'Pivot', '#e6e6fa', big) + tx(1101, 604, 'S1', '#e6e6fa', big);
  s += tx(1387, 244, 'Yest High', '#4682b4', big) + tx(1387, 602, 'Yest Low', '#4682b4', big);
  s += tx(16, 256, '#266174161 tp') + tx(16, 402, '#266174160 buy 5.87') + tx(16, 438, '#266174160 sl');
  s += tx(1788, 92, 'GBPUSD', '#ffd700', 'class="font-[\'Liberation_Sans\'] text-base font-bold"');
  s += tx(1857, 741, 'Bid Ratio 98.33%', '#0050a8', 'text-anchor="end" class="text-[10px] font-bold"');

  // higher timeframe overview: wick top, body top, body bottom, wick bottom, up/down
  const minis = [
    ['256,259,265,273,o 251,263,275,276,o 271,275,285,287,o 266,278,285,286,b 272,276,282,284,b 262,264,278,282,b 252,258,263,279,b 237,240,258,266,b 235,241,257,259,o 252,256,261,275,o 254,261,263,265,o 247,259,263,270,b 231,233,259,262,b 225,229,234,237,b 223,230,244,249,o 218,222,244,245,b 202,211,224,225,b 173,185,212,219,b 171,177,188,190,b 173,178,186,188,o 179,185,191,201,o 180,189,191,206,b 172,190,194,199,o 187,194,201,207,o 192,201,203,207,b 189,193,202,203,b 191,193,218,224,o 209,218,223,227,o 196,204,223,226,b 197,203,206,211,o 194,200,207,208,b 199,199,202,202,b',
     '1644,250 1663,257 1680,259 1721,258 1746,251 1768,236 1778,230 1798,220 1819,216 1840,216 1862,211', 184, 'GBPUSD D1'],
    ['294,301,303,306,o 301,302,305,306,o 302,305,317,320,o 307,317,328,335,o 325,327,377,382,o 366,371,377,401,b 370,375,380,381,o 372,380,382,391,o 374,381,391,393,o 368,372,394,396,b 357,372,401,403,o 373,388,401,411,b 380,388,398,400,o 388,392,399,400,b 377,388,393,395,b 367,388,395,406,o 340,346,395,397,b 315,324,347,349,b 320,324,340,343,o 331,337,343,345,o 329,331,343,345,b 329,331,356,365,o 336,339,356,363,b 318,337,340,352,b 331,337,342,345,o 333,337,346,347,b 335,337,346,347,o 327,338,346,347,b 307,310,339,341,b 307,310,322,324,o 316,322,326,328,o 322,323,329,332,b',
     '1644,312 1663,312 1685,329 1707,341 1729,356 1748,364 1762,359 1784,354 1817,349 1861,339', 308, 'GBPUSD H4'],
    ['486,502,511,515,b 493,502,530,531,o 515,516,530,534,b 510,516,519,520,o 507,515,517,524,b 510,519,525,527,b 511,515,519,520,b 508,511,516,518,b 495,502,512,517,b 491,502,508,516,o 504,507,522,527,o 511,520,522,525,b 507,520,525,527,o 521,523,524,530,b 474,484,524,526,b 479,483,505,517,o 496,504,505,515,b 486,501,505,514,b 470,481,502,504,b 443,464,482,484,b 418,426,465,476,b 420,426,444,454,o 422,443,446,452,o 425,436,447,456,b 434,436,460,465,o 449,455,460,463,b 450,456,459,460,o 456,458,468,470,o 461,466,470,474,o 470,474,476,486,b 466,471,474,477,b 461,462,472,476,b',
     '1644,524 1663,523 1685,522 1713,517 1740,516 1768,510 1784,498 1800,486 1822,478 1861,474', 432, 'GBPUSD H1']
  ];
  minis.forEach(([data, ma, ty, name]) => {
    s += tx(1703, ty, name, '#fff', 'class="text-xs"');
    data.split(' ').forEach((c, i) => {
      const [wt, bt, bb, wb, d] = c.split(','), x = 1644 + 7 * i;
      s += ln(x + .5, wt, x + .5, wb, '#555') + `<rect x="${x - 2}" y="${bt}" width="5" height="${Math.max(1, bb - bt)}" fill="${d === 'b' ? '#0050a8' : '#ff4500'}"/>`;
    });
    s += poly(ma, '#ff0', 1, 'stroke-dasharray="3 4"');
  });
  s += ln(1628, 172, 1628, 287, '#fff', 4, '2 1') + ln(1628, 296, 1628, 410, '#fff', 4, '1 6') + ln(1628, 420, 1628, 522, '#fff', 4, '1 19');

  // price scale
  [[76,'1.27660'],[111,'1.27605'],[147,'1.27550'],[182,'1.27495'],[217,'1.27440'],[252,'1.27385'],[288,'1.27330'],[323,'1.27275'],[358,'1.27220'],[394,'1.27165'],[429,'1.27110'],[464,'1.27055'],[499,'1.27000'],[535,'1.26945'],[570,'1.26890'],[605,'1.26835'],[640,'1.26780'],[673,'1.26730'],[708,'1.26675'],[743,'1.26620'],[777,'1.26565']].forEach(([y, t]) =>
    s += ln(1878, y, 1881, y, '#fff') + tx(1883, y + 3, t));
  s += '<rect x="1879" y="382" width="42" height="11" fill="#fff"/>' + tx(1883, 391, '1.27174', '#aaa');

  // oscillator pane
  s += '<g shape-rendering="crispEdges">' + [791, 852, 912].map(y => ln(10, y, 1231, y, '#2f4f4f', 1, DOT)).join('') + ln(10, 962, 1234, 962, '#e6e6fa', 2) + '</g>';
  const L = (a, b) => [[0, 1.633, 770, a], [960, 1.6165, 770, b]];
  s += trace(L('17,186 120,186 130,192 185,190 205,170 232,148 260,135 280,127 330,128 370,116 390,124 412,132 436,165 452,178 470,180 482,216 500,200 570,198 600,206 625,205 645,202 660,170 672,140 690,98 855,98 875,108 890,145 905,160 925,178 945,180 990,162 1010,150 1050,130 1080,116 1150,116 1180,108 1235,106 1262,102 1275,110 1290,115 1372,110 1390,135 1435,156 1465,146 1485,158 1510,190 1540,194 1566,194',
    '0,192 25,185 60,212 110,216 150,212 170,218 205,222 225,238 250,275 285,294 310,290 340,240 360,218 375,208 400,184 430,150 444,142'), '#87ceeb', 2);
  s += trace(L('17,278 70,278 90,284 150,282 165,278 235,282 270,296 310,300 340,330 365,358 395,374 425,380 455,368 475,366 485,350 560,354 600,326 640,314 675,342 760,348 800,330 880,330 910,305 980,292 1020,274 1060,250 1100,234 1140,236 1165,216 1210,212 1240,232 1285,232 1330,280 1370,298 1420,294 1445,320 1480,358 1530,356 1566,360',
    '0,358 60,354 85,362 130,352 150,370 200,382 230,390 265,402 280,396 350,410 400,404 425,395 444,384'), '#87ceeb', 2);
  s += trace(L('17,234 60,236 108,240 150,240 195,230 230,212 264,208 285,213 325,213 350,228 380,244 415,262 440,270 475,282 520,276 565,276 600,264 650,252 680,232 705,220 745,220 790,216 825,213 862,214 890,230 935,240 970,230 1010,212 1045,196 1075,178 1110,178 1150,176 1185,164 1215,160 1250,168 1285,172 1330,190 1380,208 1425,224 1460,248 1505,272 1545,276 1566,280',
    '0,272 30,272 60,285 100,285 140,288 175,298 210,304 250,332 285,344 320,338 365,310 400,300 425,280 444,264'), '#ff0', 2);
  s += trace(L('17,218 30,222 40,218 60,218 68,240 76,286 82,284 90,240 95,226 120,228 150,230 158,238 168,188 182,248 188,246 195,185 208,140 216,132 226,132 240,214 246,210 258,120 264,150 272,270 280,303 286,300 300,253 308,255 325,310 332,310 338,302 348,330 363,363 370,345 380,300 402,310 414,280 428,288 440,225 447,214 466,272 480,236 495,202 513,262 524,224 530,232 541,298 558,311 572,285 585,285 605,250 617,272 632,250 645,180 664,92 676,72 684,100 696,118 708,195 722,215 736,290 750,250 765,282 780,262 788,284 802,234 812,250 835,272 850,256 862,230 872,218 886,186 896,188 908,174 920,205 937,246 950,186 962,170 978,204 990,198 1004,144 1016,184 1036,150 1048,108 1062,142 1074,128 1082,170 1098,206 1110,172 1122,200 1134,178 1146,172 1160,140 1168,100 1176,150 1188,178 1212,156 1224,200 1234,248 1248,220 1262,160 1275,152 1288,170 1303,272 1318,268 1336,274 1350,246 1362,292 1380,206 1394,190 1408,208 1424,240 1442,345 1458,356 1476,345 1495,275 1518,256 1532,300 1548,304 1566,242',
    '0,240 12,228 24,206 34,224 44,284 52,284 62,256 80,344 94,304 110,340 125,353 140,350 152,356 168,322 180,320 188,334 198,324 212,352 220,350 232,378 238,380 250,424 262,334 272,352 282,320 296,270 304,274 318,256 335,236 348,206 360,200 366,230 376,270 380,268 388,218 396,208 406,214 414,190 426,198 436,166 444,164'), '#000', 2);
  s += trace(L('17,222 60,222 80,244 108,244 125,230 180,222 195,220 212,190 228,156 246,164 262,164 272,196 288,224 300,262 312,275 330,276 345,300 365,330 390,332 412,298 430,290 448,254 470,242 490,240 510,230 526,228 545,268 562,280 575,300 588,296 602,276 634,262 650,222 664,165 680,115 697,98 712,140 730,190 748,240 768,272 780,264 795,270 812,260 848,260 868,252 880,222 900,192 914,188 925,190 937,210 955,210 980,196 1004,180 1020,182 1040,162 1060,138 1076,128 1085,142 1098,166 1120,188 1135,188 1155,176 1168,142 1180,140 1204,148 1222,162 1236,196 1258,216 1275,188 1290,174 1302,196 1318,236 1336,268 1350,262 1366,270 1384,240 1400,214 1412,206 1426,220 1444,280 1460,325 1480,348 1495,320 1515,285 1530,272 1545,284 1566,288',
    '0,286 12,262 22,236 34,228 48,244 62,252 78,290 92,300 108,328 125,334 148,352 170,345 198,326 216,336 234,358 250,384 272,376 286,348 300,310 318,274 342,250 364,218 378,228 406,234 420,206 444,184'), '#f00', 2);
  s += '<ellipse cx="1199" cy="837" rx="29" ry="32" fill="none" stroke="#fff" stroke-width="3" filter="url(#sh)"/>';
  s += tx(14, 796, 'TDI Alerts v 66.5381 48.0869 29.6356 63.0514 60.0299 0.0000');
  [[801,'78'],[862,'50'],[922,'23']].forEach(([y, t]) => s += tx(1241, y, t, '#5f9ea0', 'class="text-[10px] font-bold"'));
  s += signals(1728, 794);
  s += tx(1881, 794, '80.9181') + tx(1881, 966, '0.00') + tx(1883, 967, '38.8532');
  s += tx(1586, 961, 'Activate Windows', '#a6a6a6', 'class="font-[\'Open_Sans\'] text-xl"') + tx(1586, 982, 'Go to PC settings to activate Windows.', '#acacac', 'class="font-[\'Open_Sans\'] text-sm"');

  // frame and time scale
  s += '<g shape-rendering="crispEdges">' + ln(10, 61, 1878, 61, '#fff') + ln(10, 61, 10, 971, '#fff') + ln(1878, 61, 1878, 971, '#fff') + ln(10, 781, 1922, 781, '#fff') + ln(10, 783, 1922, 783, '#fff') + ln(10, 971, 1878, 971, '#fff') + ln(8, 991.5, 1922, 991.5, '#fff') + ln(1922, 59, 1922, 992, '#fff') + '</g>';
  ['4 Jul 2023','4 Jul 02:35','4 Jul 03:55','4 Jul 05:15','4 Jul 06:35','4 Jul 07:55','4 Jul 09:15','4 Jul 10:35','4 Jul 11:55','4 Jul 13:15','4 Jul 14:35','4 Jul 15:55','4 Jul 17:15','4 Jul 18:35','4 Jul 19:55','4 Jul 21:15','4 Jul 22:35','5 Jul 00:05','5'].forEach((t, i) =>
    s += ln(10 + 64 * i, 971, 10 + 64 * i, 975, '#fff') + tx(9 + 64 * i, 984, t));
  s += tx(1247, 984, '02:45') + '<rect x="1166" y="975" width="80" height="11" fill="#000"/>' + tx(1206, 984, '2023.07.05 02:20', '#fff', 'text-anchor="middle"');
  document.getElementById('m5').innerHTML = s;

  // ---------- Daily chart ----------
  s = '<g shape-rendering="crispEdges">';
  [1978, 2138, 2322, 2482, 2666, 2842, 2850, 3074].forEach(x => s += ln(x, 71, x, 1044, '#fff', 1, DASH));
  [193, 211, 229].forEach(y => s += ln(1930, y, 3157, y, '#ff4500', 1, DASHDOT));
  s += ln(1930, 225, 3157, 225, '#32cd32', 1, DASHDOT);

  // wick top, body top, body bottom, wick bottom, in thirds of a pixel
  const daily = '1230,1303,1363,1508 1235,1251,1390,1472 1197,1230,1265,1358 1218,1245,1258,1358 1220,1281,1345,1370 1305,1350,1402,1470 1263,1305,1405,1490 1250,1303,1580,1580 1510,1573,1895,1905 1845,1930,1951,1980 1815,1897,1954,2064 1788,1861,1921,1932 1632,1771,1867,1887 1731,1768,1882,1905 1710,1735,1882,1935 1494,1663,1745,1775 1656,1675,1928,2010 1850,1942,2011,2055 1896,1915,2008,2148 1883,1900,1942,1965 1716,1786,1921,2016 1740,1792,1906,1928 1850,1918,1960,2008 1910,1963,2101,2124 1866,1876,2086,2132 1725,1885,1948,1953 1824,1942,1960,2055 1920,1948,2086,2126 1899,1909,2089,2099 1899,1936,1942,2004 1868,1948,2300,2308 2247,2278,2302,2345 2100,2134,2287,2300 1779,1930,2134,2160 1620,1651,1861,1904 1614,1669,1702,1742 1653,1702,1888,1974 1752,1780,1891,1941 1620,1666,1801,1803 1464,1477,1615,1686 1470,1486,1591,1662 1374,1498,1600,1607 1356,1465,1507,1518 1452,1471,1567,1641 1449,1462,1573,1589 1347,1365,1469,1475 1323,1365,1408,1437 1266,1278,1420,1452 1212,1288,1384,1394 1212,1221,1390,1487 1023,1068,1247,1266 1044,1069,1144,1197 1096,1147,1186,1233 1152,1180,1225,1277 1176,1216,1288,1358 1150,1207,1288,1296 1080,1099,1210,1260 1002,1027,1102,1112 984,1033,1228,1257 1182,1237,1298,1344 1160,1207,1304,1308 1117,1186,1204,1272 1130,1174,1186,1235 1164,1174,1184,1316 1095,1099,1180,1239 1056,1111,1234,1281 1041,1126,1243,1250 1040,1072,1141,1190 914,949,1096,1169 943,967,1084,1110 1048,1084,1130,1191 906,955,1136,1138 895,937,974,983 789,832,937,968 759,835,853,866 813,847,857,929 759,841,860,884 820,847,1049,1079 996,1054,1165,1175 1005,1021,1160,1175 1003,1030,1103,1135 1066,1097,1103,1218 1083,1097,1241,1272 1101,1170,1241,1272 1122,1183,1186,1225 1168,1195,1225,1286 1125,1225,1318,1335 1278,1321,1400,1412 1263,1348,1399,1418 1315,1336,1376,1376 1168,1235,1345,1391 1170,1180,1241,1353 996,1024,1195,1254 988,1027,1162,1182 1161,1165,1192,1314 1147,1210,1213,1272 1071,1183,1216,1266 957,964,1192,1195 903,925,964,1011 888,961,1048,1098 840,868,1052,1058 705,775,874,887 540,550,775,840 450,484,562,582 453,490,544,576 500,550,589,690 516,583,596,722 447,589,619,655 612,625,673,731 615,682,691,728 594,616,688,706 608,616,823,870 765,823,868,880 645,715,871,880 660,709,721,782 640,679,731,735 672,678,686,695';
  daily.split(' ').forEach((c, i) => {
    const [wt, bt, bb, wb] = c.split(',').map(v => Math.round(v / 3)), x = 1930 + 8 * i;
    s += ln(x + .5, wt, x + .5, wb, '#000') + `<rect x="${x - 2}.5" y="${bt}.5" width="4" height="${Math.max(1, bb - bt)}" fill="#bcbcbc" stroke="#000"/>`;
  });
  [2746, 2770, 2834].forEach(x => s += ln(x, 71, x, 1044, '#000', 1, DASH));
  s += [907, 976].map(y => ln(1930, y, 2858, y, '#2f4f4f', 1, '4 3')).join('') + ln(1930, 1034, 2858, 1034, '#fff', 2) + '</g>';

  s += poly('1930,400 2178,785 2538,248 2626,473 2754,148 2824,293', '#f8f8f8', 3);
  s += ring(2178, 785) + ring(2538, 247) + dot(2626, 473) + dot(2753, 141) + dot(2825, 301);
  s += '<path d="M2172 788l3-5 3 5zM2179 788l3-5 3 5z" fill="#234"/>';
  s += mark(2504, 234, 52) + mark(2740, 140, 40) + mark(2802, 292, 44) + mark(2606, 474, 44, 2);
  s += tag(2197, 778, '1.18021', '#ff0') + tag(2901, 218, '1.27174') + ln(2862, 224, 2882, 224, '#fff');
  s += '<path d="M2855 221l4 4-4 5-2-5z" fill="#0a8a1a" stroke="#fff" stroke-width=".5"/>';

  const R = (a, b) => [[1920, 2.412, 820, a], [2560, 2.405, 620, b]];
  s += trace(R('25,120 85,120 142,140 170,140 220,128 460,128 540,138 590,150 655,182 700,192 750,216 800,210 870,190 940,162 990,142 1050,128 1120,121 1220,121 1260,130 1290,146 1410,146 1500,140 1540,132',
    '0,732 75,730 115,736 160,728 200,730 240,740 300,738 345,744 420,738 450,730 480,716 520,708 570,708 620,711 718,708'), '#87ceeb', 2);
  s += trace(R('25,306 160,306 185,325 240,346 310,352 370,366 440,366 480,378 530,384 610,396 660,396 750,379 840,379 900,368 990,366 1030,354 1090,342 1160,320 1240,296 1300,245 1360,240 1410,230 1490,229 1540,246',
    '0,848 30,850 60,868 110,884 150,908 190,928 220,932 270,932 310,938 420,938 465,946 680,946 718,942'), '#87ceeb', 2);
  s += trace(R('25,212 80,213 125,220 180,230 240,238 335,242 390,246 450,248 520,258 580,266 640,286 720,296 820,294 900,274 980,256 1030,244 1090,236 1150,220 1230,210 1310,194 1395,190 1460,186 1520,187',
    '0,790 50,796 110,812 170,825 230,836 300,838 340,842 420,840 510,828 660,830 718,825'), '#ff0', 2);
  s += trace(R('25,168 45,168 60,156 85,156 120,210 142,210 160,238 180,325 198,362 218,362 260,322 275,322 296,310 315,280 335,298 354,338 375,334 412,298 432,294 470,338 508,294 545,315 562,312 585,286 604,328 625,362 640,338 662,290 682,232 700,210 720,238 738,246 758,228 780,195 818,196 835,188 855,200 875,200 895,180 920,174 972,174 992,144 1010,144 1030,165 1066,195 1088,195 1126,156 1144,182 1164,228 1182,228 1204,210 1240,206 1260,198 1298,222 1338,174 1356,184 1376,220 1415,178 1448,152 1495,156 1510,195 1530,267 1540,267',
    '0,866 25,854 42,862 65,890 84,898 100,890 120,896 158,944 182,944 198,932 220,905 258,828 276,828 296,862 312,872 334,872 370,782 390,800 412,800 448,728 466,702 486,704 508,732 545,752 580,782 598,780 618,812 642,862 660,850 682,820 700,814 718,806'), '#000', 2);
  s += trace(R('25,168 50,158 80,156 100,160 120,174 142,180 165,200 190,240 215,280 240,302 260,318 275,332 298,332 335,316 390,315 420,308 440,310 470,322 490,314 520,308 545,315 600,306 625,320 655,320 685,294 720,284 745,258 780,224 800,216 835,212 870,198 910,188 972,182 995,168 1040,165 1070,171 1126,172 1164,194 1220,198 1265,212 1290,212 1340,200 1395,200 1420,188 1455,178 1510,174 1530,190',
    '0,797 40,836 84,872 122,880 158,905 178,917 236,917 260,898 300,876 334,858 370,834 405,832 425,818 468,762 485,748 505,746 526,732 562,732 600,752 640,790 682,814 718,819'), '#f00', 2);
  s += tx(2867, 917, '50', '#5f9ea0', 'class="text-[10px] font-bold"') + tx(2867, 986, '23', '#5f9ea0', 'class="text-[10px] font-bold"');
  s += '<ellipse cx="2839" cy="899" rx="35" ry="36" fill="none" stroke="#fff" stroke-width="3" filter="url(#sh)"/>';
  s += signals(3008, 852);
  s += tx(3067, 101, 'GBPUSD', '#ffd700', 'class="font-[\'Liberation_Sans\'] text-base font-bold"');
  s += tx(3137, 800, 'Bid Ratio 98.33%', '#0050a8', 'text-anchor="end" class="text-[10px] font-bold"');
  s += tx(1987, 82, 'Daily') + tx(1934, 95, 'Ìà 2 áàðàõ; Ìàêñ.áàð¹1=558ï. Ìèí.áàð¹0=558ï. Òåêóù.=120');
  s += tx(1936, 191, '#266174160 tp') + tx(1936, 209, '#266174161 tp') + tx(1936, 223, '#266174160 buy 5.87') + tx(1936, 227, '#266174161 sl');
  s += tx(1940, 833, 'Slave', '#eee') + tx(1934, 855, 'TDI Alerts v 69.8793 54.9042 39.9292 57.3465 55.3880 0.0000');

  ['1.29560','1.29020','1.28480','1.27940','1.27400','1.26860','1.26320','1.25780','1.25240','1.24700','1.24160','1.23620','1.23080','1.22540','1.22000','1.21460','1.20920','1.20380','1.19840','1.19300','1.18775','1.18235','1.17695','1.17155'].forEach((t, i) =>
    s += ln(3157, 78 + 33 * i, 3160, 78 + 33 * i, '#fff') + tx(3163, 82 + 33 * i, t));
  s += '<rect x="3159" y="219" width="41" height="11" fill="#fff"/>' + tx(3163, 228, '1.27174', '#aaa');
  s += tx(3161, 853, '74.8625') + tx(3161, 1038, '0.00') + tx(3161, 1041, '-3.5649');

  s += '<g shape-rendering="crispEdges">' + ln(1930, 71, 3157, 71, '#fff') + ln(1930, 71, 1930, 1044, '#fff') + ln(3157, 71, 3157, 1044, '#fff') + ln(1930, 840, 3157, 840, '#fff') + ln(1930, 842, 3157, 842, '#fff') + ln(1930, 1044, 3157, 1044, '#fff') + ln(3203, 68, 3203, 1061, '#d8d8d8') + '</g>';
  ['24 Jan 2023','3 Feb 2023','15 Feb 2023','27 Feb 2023','9 Mar 2023','21 Mar 2023','31 Mar 2023','12 Apr 2023','24 Apr 2023','4 May 2023','16 May 2023','26 May 2023','7'].forEach((t, i) =>
    s += ln(1930 + 64 * i, 1044, 1930 + 64 * i, 1047, '#fff') + tx(1929 + 64 * i, 1057, t));
  s += '<rect x="2706" y="1048" width="168" height="11" fill="#000"/>' + tx(2710, 1057, '2023') + tx(2734, 1057, '2023.06.20 15:30') + tx(2809, 1057, '23.06.30 06:45');
  document.getElementById('d1').innerHTML = s;
</script>
</body>
</html>
